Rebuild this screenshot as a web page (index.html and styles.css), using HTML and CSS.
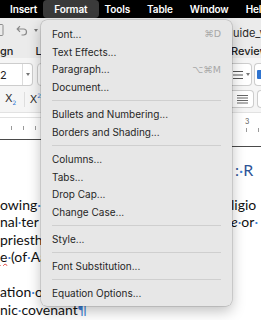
FILE: index.html
```html
<!DOCTYPE html>
<html>
<head>
<meta charset="utf-8">
<link rel="stylesheet" href="styles.css">
</head>
<body>
<div class="screen">
  <header class="menubar">
    <span class="mb-item">Insert</span>
    <span class="mb-item active">Format</span>
    <span class="mb-item">Tools</span>
    <span class="mb-item">Table</span>
    <span class="mb-item">Window</span>
    <span class="mb-item">Help</span>
  </header>

  <div class="toolbar split">
    <div class="l">
      <svg class="save" width="4" height="12" viewBox="0 0 4 12"><rect x="-8" y="0.5" width="11" height="11" rx="1" fill="none" stroke="#8d8d8d"/></svg>
      <svg class="undo" width="12" height="11" viewBox="0 0 12 11"><path d="M4 1.2 L1.2 4 L4 6.8 M1.2 4 H7.5 A3 3 0 0 1 7.5 10 H5.5" fill="none" stroke="#8a8a8a" stroke-width="1.2"/></svg>
      <svg class="caret tb-caret" width="4" height="3" viewBox="0 0 4 3"><path d="M0 0 H4 L2 3 Z" fill="#777"/></svg>
    </div>
    <div class="r title">uide_v</div>
  </div>

  <div class="tabs split">
    <div class="l"><span class="tab">gn</span><span class="tab tab-l">L</span></div>
    <div class="r"><span class="tab">Review</span></div>
  </div>

  <div class="ribbon">
    <div class="rib-row1 split">
      <div class="l">
        <div class="combo"><span class="combo-val">2</span><span class="combo-div"></span><svg class="caret" width="4" height="3" viewBox="0 0 4 3"><path d="M0 0 H4 L2 3 Z" fill="#777"/></svg></div>
        <div class="box box-next"></div>
      </div>
      <div class="r">
        <div class="box box-list">
          <svg width="10" height="8" viewBox="0 0 10 8"><path d="M0 0.5 H10 M0 4 H10 M0 7.5 H10" stroke="#555" stroke-width="1"/></svg>
          <svg class="caret" width="4" height="3" viewBox="0 0 4 3"><path d="M0 0 H4 L2 3 Z" fill="#777"/></svg>
        </div>
        <div class="box box-blue"><span class="blue-mark"></span></div>
      </div>
    </div>
    <div class="rib-row2 split">
      <div class="l">
        <span class="fmt">X<sub>2</sub></span>
        <span class="vsep"></span>
        <span class="fmt">X<sup>2</sup></span>
      </div>
      <div class="r">
        <div class="box box-just">
          <svg width="11" height="9" viewBox="0 0 11 9"><path d="M0 0.5 H11 M0 3 H11 M0 5.5 H11 M0 8 H11" stroke="#555" stroke-width="0.9"/></svg>
        </div>
        <div class="box box-next2"></div>
      </div>
    </div>
  </div>

  <div class="ruler split">
    <div class="l">
      <div class="ruler-l">
        <span class="tick"></span><span class="tick"></span><span class="tick"></span>
      </div>
    </div>
    <div class="r">
      <div class="ruler-r">
        <span class="rnum">3</span>
        <div class="rticks"><span class="tick"></span><span class="tick"></span></div>
      </div>
    </div>
  </div>

  <div class="doc">
    <div class="line head"><span></span><span class="rt">:<i class="fm">·</i>R</span></div>
    <div class="line body first"><span class="lt">owing<i class="fm">·</i></span><span class="rt">ligio</span></div>
    <div class="line body"><span class="lt">nal<i class="fm">·</i>ter</span><span class="rt"><em>e</em><i class="fm">·</i>or<i class="fm">·</i></span></div>
    <div class="line body"><span class="lt">priesth</span><span class="rt"></span></div>
    <div class="line body"><span class="lt"><span class="spell">e</span><i class="fm">·</i>(of<i class="fm">·</i>Aa</span><span class="rt"></span></div>
    <div class="line body"><span class="lt"></span><span class="rt"></span></div>
    <div class="line body"><span class="lt">ation<i class="fm">·</i>of</span><span class="rt"></span></div>
    <div class="line body"><span>nic<i class="fm">·</i>covenant<i class="fm">¶</i></span><span class="rt"></span></div>
  </div>

  <nav class="menu">
    <div class="mi"><span>Font...</span><span class="kbd">⌘D</span></div>
    <div class="mi"><span>Text Effects...</span></div>
    <div class="mi"><span>Paragraph...</span><span class="kbd">⌥⌘M</span></div>
    <div class="mi"><span>Document...</span></div>
    <div class="sep"></div>
    <div class="mi"><span>Bullets and Numbering...</span></div>
    <div class="mi"><span>Borders and Shading...</span></div>
    <div class="sep"></div>
    <div class="mi"><span>Columns...</span></div>
    <div class="mi"><span>Tabs...</span></div>
    <div class="mi"><span>Drop Cap...</span></div>
    <div class="mi"><span>Change Case...</span></div>
    <div class="sep"></div>
    <div class="mi"><span>Style...</span></div>
    <div class="sep"></div>
    <div class="mi"><span>Font Substitution...</span></div>
    <div class="sep"></div>
    <div class="mi"><span>Equation Options...</span></div>
  </nav>
</div>
</body>
</html>
```

FILE: styles.css
```css
* { box-sizing: border-box; margin: 0; padding: 0; }
html, body { width: 261px; height: 320px; overflow: hidden; background: #fff; }
body { font-family: Inter, "Noto Sans", "DejaVu Sans", sans-serif; color: #222; }

.screen { position: relative; width: 261px; height: 320px; overflow: hidden; background: #fff; }

/* macOS menu bar */
.menubar {
  display: flex; align-items: center; height: 18px; padding-left: 1.5px;
  background: #000; color: #fff; font-size: 10px; font-weight: 600; white-space: nowrap;
  letter-spacing: -0.12px;
}
.mb-item { padding: 0 8.5px; line-height: 18px; }
.mb-item.active { background: #3a3a3a; border-radius: 4px; padding: 0 11px; margin: 0 -2.5px; }

/* left / right visible strips of the window behind the menu */
.split { display: flex; justify-content: space-between; }
.split > .l { width: 41px; display: flex; align-items: center; overflow: hidden; white-space: nowrap; }
.split > .r { width: 30px; display: flex; align-items: center; overflow: hidden; white-space: nowrap; }

.caret { flex: none; }

.toolbar { height: 24px; background: #ebebeb; }
.undo { margin-left: 12px; }
.tb-caret { margin-left: 6px; }
.title { font-size: 11px; color: #2a2a2a; padding: 6px 0 0 2px; }

.tabs { height: 16px; background: #ebebeb; }
.tab { font-size: 11px; font-weight: 500; color: #1e1e1e; padding-top: 2px; }
.tab-l { margin-left: 22px; }

.ribbon { background: #f5f5f5; padding: 5px 0 4px; height: 55px; border-bottom: 1px solid #e2e2e2; }
.rib-row1 { height: 23px; }
.rib-row2 { height: 18px; margin-top: 4px; }

.box { height: 100%; background: #fff; border: 1px solid #cdcdcd; border-radius: 4px; flex: none; }
.combo { height: 100%; width: 33px; display: flex; align-items: center; background: #fff;
  border: 1px solid #cdcdcd; border-left: none; border-radius: 0 4px 4px 0; font-size: 11px; color: #222; flex: none; }
.combo-val { width: 22px; }
.combo-div { width: 1px; height: 100%; background: #dcdcdc; margin-right: 3px; }
.box-next { width: 20px; margin-left: 4px; }

.box-list { width: 21px; display: flex; align-items: center; gap: 3px; padding-left: 2px; border-left: none; border-radius: 0 4px 4px 0; }
.box-blue { width: 10px; margin-left: 2px; display: flex; align-items: center; padding-left: 2px; border-right: none; border-radius: 4px 0 0 4px; }
.blue-mark { width: 6px; height: 9px; background: #2f74d0; border-radius: 1px; }

.fmt { font-size: 11px; color: #333; padding-left: 5px; font-family: "DejaVu Sans", sans-serif; }
.fmt sub, .fmt sup { font-size: 6px; color: #2d72d2; }
.vsep { width: 1px; height: 15px; background: #dedede; margin-left: 8px; }
.fmt + .vsep + .fmt { padding-left: 5px; }
.box-just { width: 23px; display: flex; align-items: center; justify-content: center; border-left: none; border-radius: 0 4px 4px 0; }
.box-next2 { width: 5px; margin-left: 3px; border-right: none; border-radius: 4px 0 0 4px; }

.ruler { height: 34px; background: #fff; align-items: flex-start; }
.ruler > .l, .ruler > .r { align-items: stretch; flex-direction: column; }
.ruler-l { height: 23px; border-top: 1px solid #e2e2e2; margin-top: 4px; border-bottom: 1px solid #4a4a4a;
  display: flex; gap: 11px; padding: 8px 0 0 11px; }
.tick { width: 1px; height: 4px; background: #9a9a9a; flex: none; }
.ruler-r { height: 34px; border-bottom: 1px solid #4a4a4a; padding-top: 5px; }
.rnum { display: block; font-size: 7px; color: #555; padding-left: 14px; line-height: 8px; }
.rticks { display: flex; gap: 11px; padding: 2px 0 0 15px; }

/* document */
.doc { background: #fff; padding-top: 12px; font-family: Lato, "Open Sans", sans-serif; }
.line { display: flex; justify-content: space-between; white-space: nowrap; }
.line > .lt { width: 41px; overflow: hidden; }
.line > .rt { width: 30px; overflow: hidden; }
.head { height: 22px; line-height: 22px; font-size: 16px; color: #2f5496; }
.head .rt { padding-left: 4px; }
.body { height: 17.5px; line-height: 17.5px; font-size: 14px; color: #111; }
.body.first { margin-top: 14.75px; }
.fm { font-style: normal; color: #3b7fd8; }
.spell { text-decoration: underline wavy #e0403a; text-decoration-thickness: 1px; }
.rt em { font-style: italic; }

/* Format menu */
.menu {
  position: absolute; left: 41px; top: 20px; width: 191px; padding: 5px 0 4px;
  background: #e7e7e7; border-radius: 6px;
  box-shadow: 0 0 0 0.5px rgba(0,0,0,0.22), 0 5px 14px rgba(0,0,0,0.25);
  font-family: Inter, "DejaVu Sans", sans-serif; font-size: 10px; color: #262626;
}
.mi { height: 17.75px; display: flex; align-items: center; justify-content: space-between; padding: 0 11px; white-space: nowrap; }
.kbd { color: #a8a8a8; font-size: 9.5px; font-family: "DejaVu Sans", sans-serif; }
.sep { height: 1px; margin: 4px 11px 4.25px; background: #cfcfcf; }
```
